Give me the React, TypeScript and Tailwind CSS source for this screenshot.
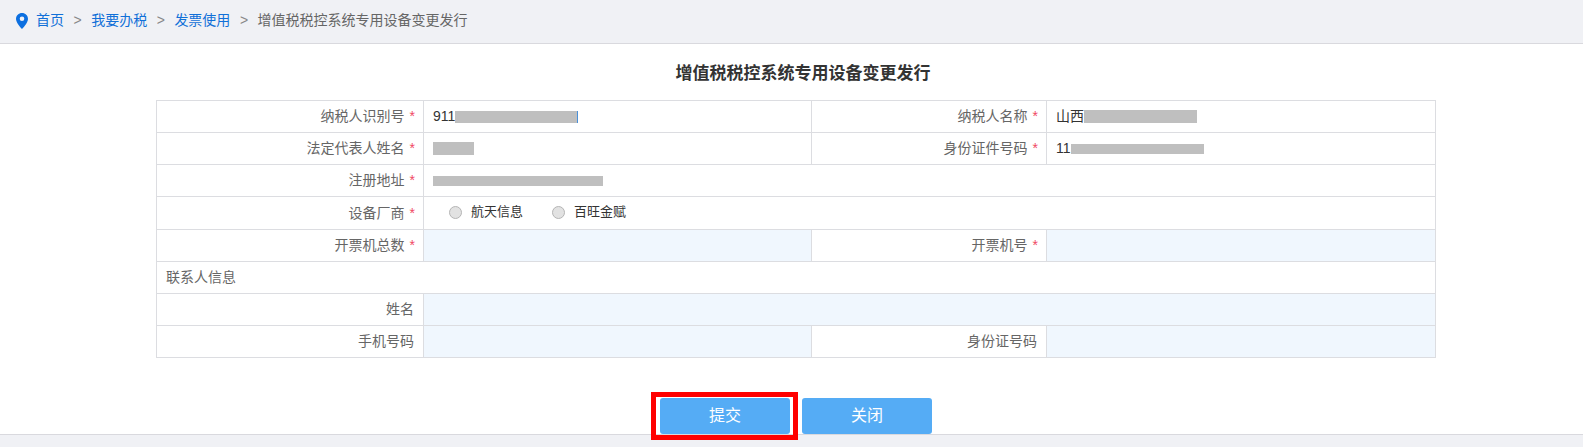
const labelCls =
  "flex items-center justify-end pr-[8px] text-[14px] text-[#666] border-r border-[#dcdde1] h-full";
const cellBlue = "h-full bg-[#f0f7fe]";

const Star = () => <span className="ml-[5px] text-[14px] text-[#f04864]">*</span>;

const Row = ({ tall, children }: { tall?: boolean; children: React.ReactNode }) => (
  <div className={`flex border-b border-[#dcdde1] ${tall ? "h-[33px]" : "h-[32px]"}`}>{children}</div>
);

const Label = ({ text, required, width }: { text: string; required?: boolean; width: string }) => (
  <div className={`${labelCls} ${width}`}>
    <span>{text}</span>
    {required ? <Star /> : <span className="w-[1px]" />}
  </div>
);

const Blur = ({ className }: { className: string }) => (
  <span className={`inline-block bg-[#bfbfbf] ${className}`} />
);

const Radio = ({ text }: { text: string }) => (
  <label className="flex items-center">
    <span className="w-[13px] h-[13px] rounded-full border border-[#b5b5b5] bg-[#e2e2e2] mr-[9px]" />
    <span className="text-[13px] text-[#333]">{text}</span>
  </label>
);

export default function App() {
  return (
    <div className="w-[1583px] h-[447px] overflow-hidden flex flex-col bg-white font-['Liberation_Sans','Noto_Sans_CJK_SC',sans-serif]">
      <div className="h-[44px] shrink-0 flex items-center pl-[16px] pb-[2px] bg-[#f0f1f5] border-b border-[#d9d9de] text-[14px]">
        <svg width="12" height="16" viewBox="0 0 12 16" className="mr-[8px]">
          <path
            fill="#0c6fe0"
            fillRule="evenodd"
            d="M6 0C2.7 0 0 2.6 0 5.9 0 10 6 16 6 16s6-6 6-10.100C12 2.600 9.300 0 6 0Zm0 8.100A2.300 2.300 0 1 1 6 3.500a2.300 2.300 0 0 1 0 4.600Z"
          />
        </svg>
        <a className="text-[#1170d8]">首页</a>
        <span className="mx-[9.5px] text-[#888]">&gt;</span>
        <a className="text-[#1170d8]">我要办税</a>
        <span className="mx-[9.5px] text-[#888]">&gt;</span>
        <a className="text-[#1170d8]">发票使用</a>
        <span className="mx-[9.5px] text-[#888]">&gt;</span>
        <span className="text-[#666]">增值税税控系统专用设备变更发行</span>
      </div>

      <div className="flex-1 flex flex-col">
        <h1 className="h-[56px] pt-[17px] pl-[23px] text-center text-[17px] font-bold text-[#333]">
          增值税税控系统专用设备变更发行
        </h1>

        <div className="mx-[156px] w-[1280px] border-t border-l border-r border-[#dcdde1] text-[14px]">
          <Row>
            <Label text="纳税人识别号" required width="w-[267px]" />
            <div className="w-[388px] h-full flex items-center pl-[9px] border-r border-[#dcdde1] text-[#333]">
              911
              <Blur className="w-[123px] h-[12px] border-r border-[#4a90d9]" />
            </div>
            <Label text="纳税人名称" required width="w-[235px]" />
            <div className="flex-1 flex items-center pl-[9px] text-[#333]">
              山西
              <Blur className="w-[113px] h-[13px]" />
            </div>
          </Row>
          <Row>
            <Label text="法定代表人姓名" required width="w-[267px]" />
            <div className="w-[388px] h-full flex items-center pl-[9px] border-r border-[#dcdde1]">
              <Blur className="w-[41px] h-[13px]" />
            </div>
            <Label text="身份证件号码" required width="w-[235px]" />
            <div className="flex-1 flex items-center pl-[9px] text-[#333]">
              11
              <Blur className="w-[133px] h-[10px]" />
            </div>
          </Row>
          <Row>
            <Label text="注册地址" required width="w-[267px]" />
            <div className="flex-1 flex items-center pl-[9px]">
              <Blur className="w-[170px] h-[10px]" />
            </div>
          </Row>
          <Row tall>
            <Label text="设备厂商" required width="w-[267px]" />
            <div className="flex-1 flex items-center pl-[25px] pb-[2px] gap-[29px]">
              <Radio text="航天信息" />
              <Radio text="百旺金赋" />
            </div>
          </Row>
          <Row>
            <Label text="开票机总数" required width="w-[267px]" />
            <div className={`w-[388px] border-r border-[#dcdde1] ${cellBlue}`} />
            <Label text="开票机号" required width="w-[235px]" />
            <div className={`flex-1 ${cellBlue}`} />
          </Row>
          <Row>
            <div className="flex items-center pl-[9px] text-[#666]">联系人信息</div>
          </Row>
          <Row>
            <Label text="姓名" width="w-[267px]" />
            <div className={`flex-1 ${cellBlue}`} />
          </Row>
          <Row>
            <Label text="手机号码" width="w-[267px]" />
            <div className={`w-[388px] border-r border-[#dcdde1] ${cellBlue}`} />
            <Label text="身份证号码" width="w-[235px]" />
            <div className={`flex-1 ${cellBlue}`} />
          </Row>
        </div>

        <div className="mt-[40px] flex justify-center gap-[12px] pl-[9px]">
          <div className="relative">
            <button className="block w-[130px] h-[36px] rounded-[3px] bg-[#55acf5] text-white text-[16px]">
              提交
            </button>
            {/* red annotation box drawn over the button */}
            <div className="absolute -left-[9px] -right-[8px] -top-[6px] -bottom-[6px] border-[5px] border-[#ff0000]" />
          </div>
          <button className="w-[130px] h-[36px] rounded-[3px] bg-[#55acf5] text-white text-[16px]">
            关闭
          </button>
        </div>
      </div>

      <div className="h-[13px] shrink-0 bg-[#f0f1f5] border-t border-[#d9d9de]" />
    </div>
  );
}
